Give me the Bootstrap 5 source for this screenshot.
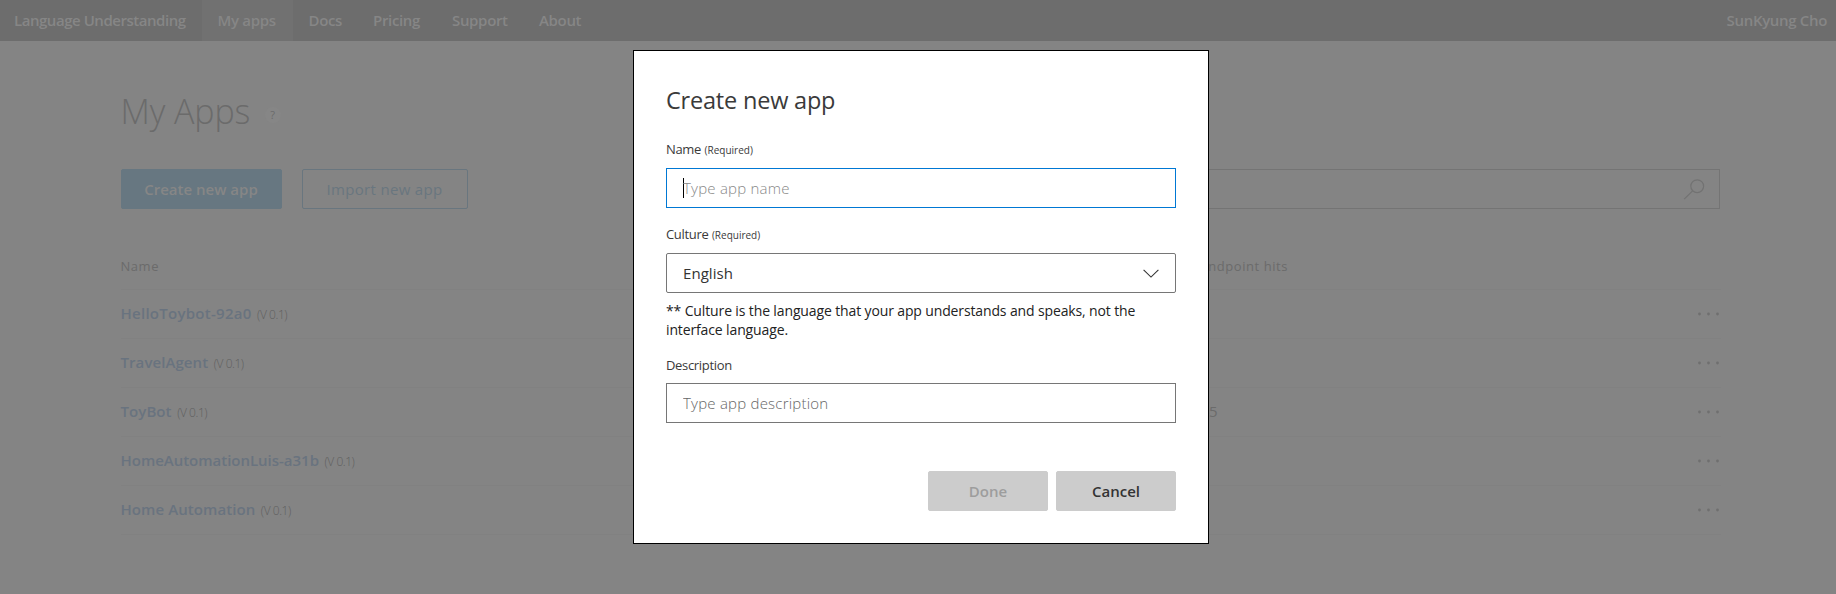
<!DOCTYPE html>
<html lang="en">
<head>
<meta charset="utf-8">
<title>My Apps - Language Understanding</title>
<link href="https://cdn.jsdelivr.net/npm/bootstrap@5.3.0/dist/css/bootstrap.min.css" rel="stylesheet">
<script src="https://cdn.jsdelivr.net/npm/bootstrap@5.3.0/dist/js/bootstrap.bundle.min.js"></script>
<style>
body{font-family:"Open Sans","Noto Sans",sans-serif;font-size:15px;background:#848484;color:#6b6b6b;height:594px;overflow:hidden}
.topbar{height:41px;background:#6d6d6d;color:#868686;font-weight:600;letter-spacing:-.33px;line-height:41px;padding-right:9px}
.topbar .brand{padding-left:14px;width:202px;letter-spacing:-.46px}
.topbar .link{padding-left:15.5px}
.topbar .current{background:#717171}
.page{width:1600px;margin-left:120.5px;padding-top:46px}
h1{font-size:34px;font-weight:300;line-height:48px;letter-spacing:-.1px;margin:0;width:144px}
.help{width:16px;height:16px;background:#868686;font-size:11px;line-height:16px;margin-top:7px}
.tools{margin-top:34px;width:1599px}
.tools .btn,.dialog .btn{font-size:15px;height:40px;padding:0;border-radius:2px;line-height:37px}
.make{width:161px;background:#677781;color:#868686;font-weight:600;border-color:#677781}
.import{width:166px;color:#69767f;border-color:#69767f;letter-spacing:.33px;background:none;margin-left:20px}
.finder{width:640px;height:40px;border:1px solid #747474;padding-right:14px}
.apps{margin-top:37px}
.line{border-bottom:1px solid #818181;height:49px;width:1600px}
.line > div{padding-bottom:2px}
.line.heading{height:44px;font-size:13px;letter-spacing:.55px}
.line .title{width:1080px}
.app{color:#69737f;font-weight:600;letter-spacing:.08px}
.ver{font-size:12px;font-weight:300;letter-spacing:-.45px;margin-left:5.5px;color:#606060}
.shade{position:absolute;inset:0;padding-top:50px}
.dialog{width:576px;height:494px;background:#fff;border:1px solid #000;padding:33px 32px 32px;color:#222;margin-left:633px}
.dialog h2{font-size:23.5px;font-weight:400;line-height:32px;letter-spacing:-.2px;margin:0 0 24px;color:#3a3a3a}
.dialog label{display:block;height:18px;font-size:13px;line-height:18px;letter-spacing:-.33px;margin-bottom:10px;color:#3a3a3a}
.dialog label small{font-size:10px;line-height:1;letter-spacing:0;margin-left:.5px}
.field{height:40px;width:510px;border:1px solid #767676;border-radius:0;padding:0 16px;font-size:15px;font-weight:300;letter-spacing:.22px;color:#333;line-height:38px}
.field::placeholder{color:#666;opacity:1}
.field.active{border-color:#0078d4;color:#888}
.field.choice{border-radius:2px;font-weight:400;letter-spacing:.05px}
.caret{width:1px;height:20px;background:#000;margin-right:-1px}
.note{font-size:14px;line-height:19px;letter-spacing:-.13px;margin:8px 0 17px;color:#222}
.actions{margin-top:48px;gap:8px}
.actions .btn{width:120px;background:#ccc;border-color:#ccc;font-weight:600;color:#333}
.actions .btn:disabled{color:#9d9d9d;opacity:1;background:#ccc;border-color:#ccc}
</style>
</head>
<body>
<nav class="topbar d-flex">
  <div class="brand">Language Understanding</div>
  <div class="link current" style="width:91px">My apps</div>
  <div class="link" style="width:64.5px">Docs</div>
  <div class="link" style="width:79px">Pricing</div>
  <div class="link" style="width:87px">Support</div>
  <div class="link">About</div>
  <div class="ms-auto">SunKyung Cho</div>
</nav>
<main class="page">
  <div class="d-flex align-items-center"><h1>My Apps</h1><span class="help rounded-circle text-center">?</span></div>
  <div class="tools d-flex">
    <button class="btn make">Create new app</button>
    <button class="btn import">Import new app</button>
    <div class="finder ms-auto d-flex align-items-center justify-content-end">
      <svg width="22" height="22" viewBox="0 0 22 22" fill="none" stroke="#727272" stroke-width="1.2"><circle cx="14.2" cy="8.2" r="6.4"/><path d="M9.6 12.8 1.2 21.2"/></svg>
    </div>
  </div>
  <section class="apps">
    <div class="line heading d-flex align-items-center"><div class="title">Name</div><div>Endpoint hits</div></div>
    <div class="line d-flex align-items-center"><div class="title"><span class="app" style="letter-spacing:.27px">HelloToybot-92a0</span><span class="ver">(V 0.1)</span></div><div>0</div><svg class="ms-auto" width="24" height="4" fill="#6f6f6f"><circle cx="2.5" cy="2" r="1.4"/><circle cx="11.5" cy="2" r="1.4"/><circle cx="20.5" cy="2" r="1.4"/></svg></div>
    <div class="line d-flex align-items-center"><div class="title"><span class="app">TravelAgent</span><span class="ver">(V 0.1)</span></div><div>5</div><svg class="ms-auto" width="24" height="4" fill="#6f6f6f"><circle cx="2.5" cy="2" r="1.4"/><circle cx="11.5" cy="2" r="1.4"/><circle cx="20.5" cy="2" r="1.4"/></svg></div>
    <div class="line d-flex align-items-center"><div class="title"><span class="app">ToyBot</span><span class="ver">(V 0.1)</span></div><div>45</div><svg class="ms-auto" width="24" height="4" fill="#6f6f6f"><circle cx="2.5" cy="2" r="1.4"/><circle cx="11.5" cy="2" r="1.4"/><circle cx="20.5" cy="2" r="1.4"/></svg></div>
    <div class="line d-flex align-items-center"><div class="title"><span class="app" style="letter-spacing:-.02px">HomeAutomationLuis-a31b</span><span class="ver">(V 0.1)</span></div><div>0</div><svg class="ms-auto" width="24" height="4" fill="#6f6f6f"><circle cx="2.5" cy="2" r="1.4"/><circle cx="11.5" cy="2" r="1.4"/><circle cx="20.5" cy="2" r="1.4"/></svg></div>
    <div class="line d-flex align-items-center"><div class="title"><span class="app">Home Automation</span><span class="ver">(V 0.1)</span></div><div>0</div><svg class="ms-auto" width="24" height="4" fill="#6f6f6f"><circle cx="2.5" cy="2" r="1.4"/><circle cx="11.5" cy="2" r="1.4"/><circle cx="20.5" cy="2" r="1.4"/></svg></div>
  </section>
</main>
<div class="shade">
  <div class="dialog">
    <h2>Create new app</h2>
    <label>Name <small>(Required)</small></label>
    <div class="field active d-flex align-items-center"><span class="caret"></span><span>Type app name</span></div>
    <label style="margin-top:17px">Culture <small>(Required)</small></label>
    <div class="field choice d-flex align-items-center justify-content-between">English
      <svg width="16" height="9" viewBox="0 0 16 9" fill="none" stroke="#333" stroke-width="1.1"><path d="M.6.8 8 8.1 15.4.8"/></svg>
    </div>
    <p class="note">** Culture is the language that your app understands and speaks, not the interface language.</p>
    <label style="margin-bottom:9px">Description</label>
    <input class="field d-block" placeholder="Type app description">
    <div class="actions d-flex justify-content-end">
      <button class="btn" disabled>Done</button>
      <button class="btn">Cancel</button>
    </div>
  </div>
</div>
</body>
</html>
